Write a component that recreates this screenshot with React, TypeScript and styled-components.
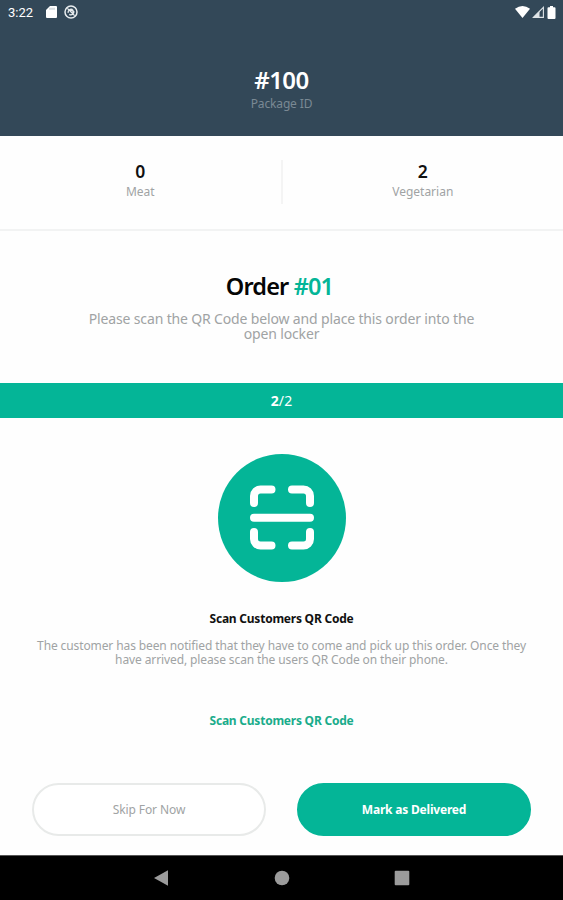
import React from "react";
import styled, { createGlobalStyle } from "styled-components";

const Global = createGlobalStyle`
  * { box-sizing: border-box; }
  body { margin: 0; background: #fff; font-family: "Noto Sans", sans-serif; }
`;

const green = "#04b597";

const Screen = styled.main`
  width: 563px;
  height: 900px;
  display: flex;
  flex-direction: column;
  background: #fefefe;
  overflow: hidden;
`;

const Header = styled.header`
  height: 135.5px;
  flex: none;
  display: flex;
  flex-direction: column;
  background: #334858;
`;

const StatusBar = styled.div`
  height: 24px;
  flex: none;
  display: flex;
  align-items: center;
  padding: 0 6px 0 8px;
  color: #fff;
  svg { display: block; }
`;

const Clock = styled.span`
  font: 400 13px/24px Roboto, sans-serif;
  width: 36px;
  padding-top: 1px;
`;

const StatusIcons = styled.div<{ $end?: boolean }>`
  display: flex;
  align-items: center;
  gap: ${(p) => (p.$end ? 2 : 7)}px;
  margin-left: ${(p) => (p.$end ? "auto" : "2px")};
`;

const Text = styled.div<{
  $size: number;
  $line: number;
  $weight?: number;
  $color?: string;
  $spacing?: number;
}>`
  font-size: ${(p) => p.$size}px;
  line-height: ${(p) => p.$line}px;
  font-weight: ${(p) => p.$weight ?? 400};
  color: ${(p) => p.$color ?? "#a0a3a4"};
  letter-spacing: ${(p) => p.$spacing ?? 0}px;
  text-align: center;
  white-space: nowrap;
`;

const PackageInfo = styled.div`
  padding-top: 40.5px;
`;

const Stats = styled.section`
  height: 95px;
  flex: none;
  display: grid;
  grid-template-columns: 1fr 2px 1fr;
  padding-top: 24.5px;
  border-bottom: 2px solid #f2f3f3;
`;

const Divider = styled.div`
  height: 44px;
  background: #f4f4f4;
`;

const Order = styled.section`
  height: 152.5px;
  flex: none;
  padding-top: 38px;
`;

const OrderTitle = styled(Text)`
  margin: 0 4px 8px 0;
`;

const Accent = styled.span`
  color: ${green};
`;

const Progress = styled.div`
  height: 35px;
  flex: none;
  background: ${green};
`;

const Scan = styled.section`
  flex: 1;
  display: flex;
  flex-direction: column;
  align-items: center;
  padding-top: 36px;
`;

const ScanBadge = styled.div`
  width: 128px;
  height: 128px;
  border-radius: 50%;
  background: ${green};
  margin-bottom: 28px;
`;

const Description = styled.div`
  margin: 11px 0 45px;
`;

const ScanLink = styled.button`
  border: 0;
  padding: 0;
  background: none;
  font: inherit;
`;

const Actions = styled.footer`
  height: 72px;
  flex: none;
  display: grid;
  grid-template-columns: 234px 234px;
  column-gap: 31px;
  padding-left: 32px;
`;

const Pill = styled.button<{ $filled?: boolean }>`
  height: 53px;
  padding: 0;
  border-radius: 27px;
  border: 2px solid ${(p) => (p.$filled ? green : "#e8eae9")};
  background: ${(p) => (p.$filled ? green : "#fff")};
  font: inherit;
`;

const NavBar = styled.nav`
  height: 45px;
  flex: none;
  display: flex;
  justify-content: center;
  align-items: center;
  gap: 104px;
  background: #000;
  border-top: 1px solid #555;
  svg { display: block; }
`;

export default function App() {
  return (
    <Screen>
      <Global />
      <Header>
        <StatusBar>
          <Clock>3:22</Clock>
          <StatusIcons>
            <svg width="11" height="12" viewBox="0 0 11 12">
              <path d="M4 0h6a1 1 0 0 1 1 1v10a1 1 0 0 1-1 1H1a1 1 0 0 1-1-1V4z" fill="#fff" />
              <path d="M4 1.8v2M6 1.8v2M8 1.8v2" stroke="#a9b3ba" strokeWidth=".9" />
            </svg>
            <svg width="14" height="14" viewBox="0 0 14 14" fill="none" stroke="#e9edef">
              <circle cx="7" cy="7" r="6" strokeWidth="1.5" />
              <path d="M4.2 7.8a3 3 0 0 1 4.5-3.2M9.8 6.2a3 3 0 0 1-4.5 3.2M3.4 3.4l7.2 7.2M6 5.5h3v3" strokeWidth="1.3" />
            </svg>
          </StatusIcons>
          <StatusIcons $end>
            <svg width="15" height="12" viewBox="0 0 15 12">
              <path d="M0 2.8Q7.5-2.6 15 2.8L7.5 12z" fill="#fff" />
            </svg>
            <svg width="12" height="12" viewBox="0 0 12 12">
              <path d="M1.4 11.4 11.4 1.4v10z" fill="none" stroke="#dfe4e7" strokeWidth="1.1" />
              <path d="M1 11.6 7.5 5v6.6z" fill="#dfe4e7" />
            </svg>
            <svg width="11" height="13" viewBox="0 0 11 13">
              <path d="M4 0h3v1.2h1.5a1 1 0 0 1 1 1V12a1 1 0 0 1-1 1h-6a1 1 0 0 1-1-1V2.2a1 1 0 0 1 1-1H4z" fill="#fff" />
            </svg>
          </StatusIcons>
        </StatusBar>
        <PackageInfo>
          <Text $size={24} $line={30} $weight={600} $color="#fff" $spacing={-0.5}>#100</Text>
          <Text $size={12} $line={17} $color="#7a8994" $spacing={-0.15}>Package ID</Text>
        </PackageInfo>
      </Header>

      <Stats>
        <div>
          <Text $size={17.5} $line={23} $weight={600} $color="#111">0</Text>
          <Text $size={12} $line={17}>Meat</Text>
        </div>
        <Divider />
        <div>
          <Text $size={17.5} $line={23} $weight={600} $color="#111">2</Text>
          <Text $size={12} $line={17}>Vegetarian</Text>
        </div>
      </Stats>

      <Order>
        <OrderTitle as="h1" $size={23.5} $line={34} $weight={600} $color="#050505" $spacing={-0.85}>
          Order <Accent>#01</Accent>
        </OrderTitle>
        <Text $size={14} $line={15} $spacing={-0.15}>
          Please scan the QR Code below and place this order into the
          <br />
          open locker
        </Text>
      </Order>

      <Progress>
        <Text $size={14} $line={36} $color="#fff" $spacing={0.1}>
          <b>2</b>/2
        </Text>
      </Progress>

      <Scan>
        <ScanBadge>
          <svg width="128" height="128" viewBox="0 0 128 128" fill="none" stroke="#fff" strokeWidth="8" strokeLinecap="round" strokeLinejoin="round">
            <path d="M36 49V42a6.500 6.500 0 0 1 6.500-6.500H53.500M74 35.500H85.500a6.500 6.500 0 0 1 6.500 6.500V49M36 78V85a6.500 6.500 0 0 0 6.500 6.500H53.500M74 91.500H85.500a6.500 6.500 0 0 0 6.500-6.500V78M36 63.700H92" />
          </svg>
        </ScanBadge>
        <Text $size={12} $line={18} $weight={700} $color="#111" $spacing={-0.23}>Scan Customers QR Code</Text>
        <Description>
          <Text $size={12} $line={14} $spacing={-0.11}>
            The customer has been notified that they have to come and pick up this order. Once they
            <br />
            have arrived, please scan the users QR Code on their phone.
          </Text>
        </Description>
        <ScanLink>
          <Text $size={12} $line={18} $weight={700} $color="#1aac8b" $spacing={-0.23}>Scan Customers QR Code</Text>
        </ScanLink>
      </Scan>

      <Actions>
        <Pill>
          <Text $size={12} $line={20} $spacing={-0.1}>Skip For Now</Text>
        </Pill>
        <Pill $filled>
          <Text $size={12} $line={20} $weight={700} $color="#fff" $spacing={-0.2}>Mark as Delivered</Text>
        </Pill>
      </Actions>

      <NavBar>
        <svg width="16" height="16" viewBox="0 0 16 16"><path d="M0 8 14 .3v15.400z" fill="#9b9b9b" /></svg>
        <svg width="16" height="16" viewBox="0 0 16 16"><circle cx="8" cy="8" r="7.300" fill="#9b9b9b" /></svg>
        <svg width="16" height="16" viewBox="0 0 16 16"><rect x=".7" y=".7" width="14.600" height="14.600" rx="1" fill="#9b9b9b" /></svg>
      </NavBar>
    </Screen>
  );
}
